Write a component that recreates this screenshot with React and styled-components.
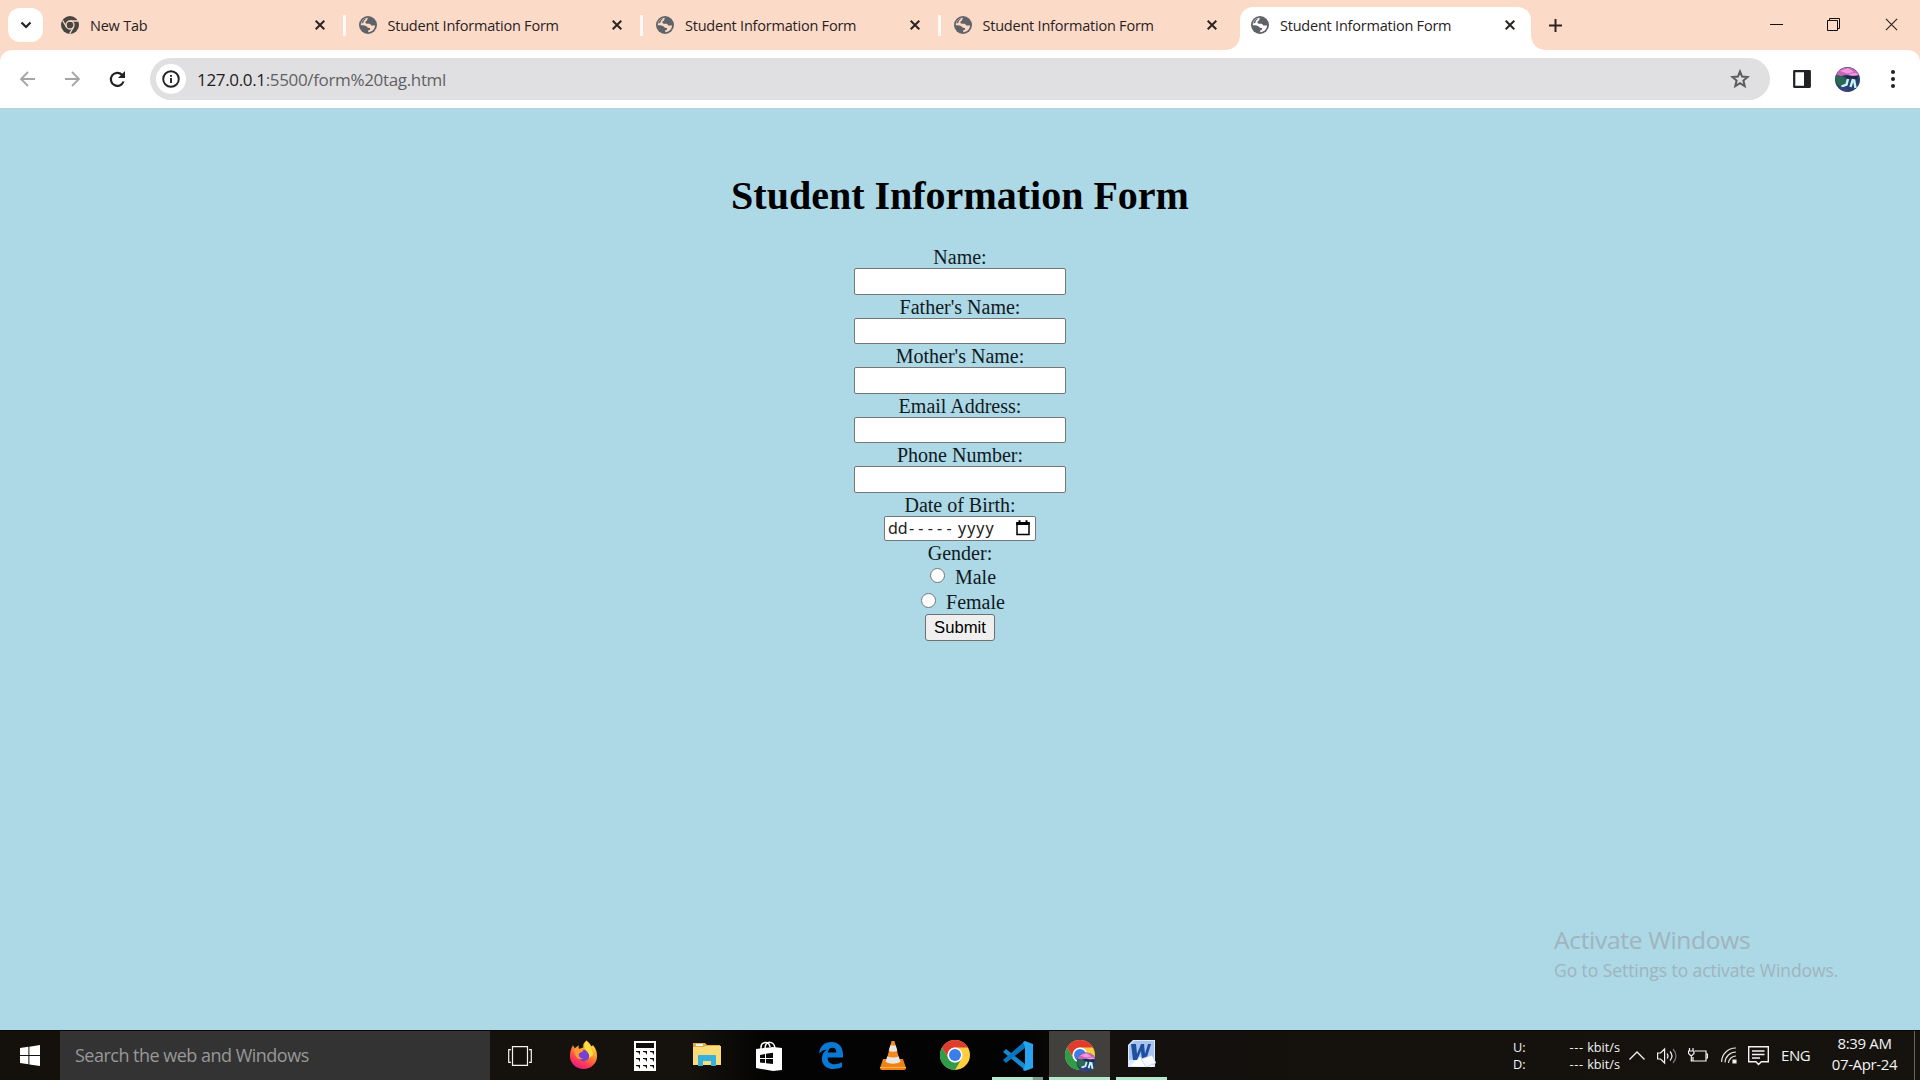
import React from "react";
import styled, { createGlobalStyle } from "styled-components";

const Global = createGlobalStyle`
  * { box-sizing: border-box; }
  body { margin: 0; overflow: hidden; font-family: "Open Sans", "Noto Sans", sans-serif; }
  svg { display: block; flex: none; }
`;
const ui = `"Open Sans", "Noto Sans", sans-serif`;

const Screen = styled.div`
  width: 1920px;
  height: 1080px;
  display: flex;
  flex-direction: column;
  overflow: hidden;
`;

/* ---------- tab strip ---------- */
const TabStrip = styled.div`
  height: 50px;
  flex: none;
  display: flex;
  background: #fcdac8;
`;
const TabSearch = styled.button`
  width: 35px;
  height: 34px;
  margin: 8px 5px 0 8px;
  padding: 0;
  border: 0;
  border-radius: 12px;
  background: #fff;
  display: flex;
  align-items: center;
  justify-content: center;
`;
const TabItem = styled.div`
  position: relative;
  width: ${(p) => (p.$active ? 291 : 297.5)}px;
  height: 43px;
  margin-top: 7px;
  margin-left: ${(p) => (p.$active ? 2 : 0)}px;
  padding: 0 ${(p) => (p.$active ? 16 : 21)}px 8px ${(p) => (p.$active ? 11 : 13)}px;
  display: flex;
  align-items: center;
  background: ${(p) => (p.$active ? "#fff" : "transparent")};
  border-radius: 13px 13px 0 0;
  ${(p) =>
    p.$divider &&
    `&::after { content: ""; position: absolute; right: 0; top: 8px; width: 3px; height: 21px; border-radius: 1px; background: #fffaf7; }`}
  ${(p) =>
    p.$active &&
    `&::before, &::after { content: ""; position: absolute; bottom: 0; width: 14px; height: 14px; }
     &::before { left: -14px; background: radial-gradient(circle at 0 0, transparent 13.5px, #fff 14px); }
     &::after { right: -14px; background: radial-gradient(circle at 100% 0, transparent 13.5px, #fff 14px); }`}
`;
const TabTitle = styled.span`
  flex: 1;
  margin-left: 11px;
  padding-top: 2px;
  font: 400 14.5px/20px ${ui};
  letter-spacing: -0.22px;
  color: #28221f;
  white-space: nowrap;
`;
const WindowButtons = styled.div`
  margin-left: auto;
  display: flex;
  gap: 44px;
  padding: 18px 22px 0 0;
`;
const NewTab = styled.div`
  padding: 19px 0 0 18px;
`;

/* ---------- toolbar ---------- */
const ToolbarBack = styled.div`
  height: 58px;
  flex: none;
  background: #fcdac8;
`;
const Toolbar = styled.div`
  height: 58px;
  display: flex;
  align-items: center;
  background: #fff;
  border-radius: 12px 12px 0 0;
  padding: 0 20px 0 19px;
`;
const NavIcons = styled.div`
  display: flex;
  gap: 27px;
  width: 131px;
`;
const Omnibox = styled.div`
  width: 1620px;
  height: 42px;
  border-radius: 21px;
  background: #e0e0e2;
  display: flex;
  align-items: center;
  padding: 0 20px 0 6px;
`;
const SiteInfo = styled.div`
  width: 30px;
  height: 30px;
  border-radius: 15px;
  background: #fff;
  display: flex;
  align-items: center;
  justify-content: center;
`;
const Url = styled.div`
  flex: 1;
  margin-left: 11px;
  padding-top: 2px;
  font: 400 17px/24px ${ui};
  letter-spacing: -0.34px;
  color: #606164;
`;
const Host = styled.span`
  color: #1f2023;
`;
const ToolbarEnd = styled.div`
  display: flex;
  align-items: center;
  margin-left: 23px;
`;
const Spaced = styled.div`
  margin-left: ${(p) => p.$gap}px;
`;

/* ---------- page ---------- */
const Page = styled.main`
  position: relative;
  height: 922px;
  flex: none;
  background: #add8e6;
  border-top: 1px solid #b9d0d8;
  font: 400 20px/23px "Liberation Serif", serif;
  color: #101a1e;
  padding-top: 64px;
`;
const Heading = styled.h1`
  margin: 0 0 26px;
  font: 700 40px/46px "Liberation Serif", serif;
  text-align: center;
  color: #000;
`;
const Form = styled.form`
  display: flex;
  flex-direction: column;
  align-items: center;
`;
const Label = styled.label`
  height: 23px;
  line-height: 24px;
`;
const Field = styled.input`
  width: 212px;
  height: 26.6px;
  border: 1px solid #767676;
  border-radius: 2px;
  background: #fff;
  padding: 0;
`;
const DateField = styled.div`
  width: 152px;
  height: 25px;
  border: 1px solid #767676;
  border-radius: 2px;
  background: #fff;
  display: flex;
  align-items: center;
  padding: 0 5px 0 3px;
`;
const DateText = styled.span`
  flex: 1;
  display: flex;
  font: 400 16px/22px "Noto Sans", ${ui};
  color: #222;
`;
const DatePart = styled.span`
  width: ${(p) => p.$w}px;
  letter-spacing: ${(p) => p.$ls || 0}px;
`;
const RadioRow = styled.label`
  height: 25px;
  display: flex;
  align-items: flex-start;
  line-height: 27px;
  padding-left: 2px;
`;
const Radio = styled.input.attrs({ type: "radio" })`
  appearance: none;
  width: 15px;
  height: 15px;
  margin: 4px 10px 0 4px;
  border: 1px solid #767676;
  border-radius: 50%;
  background: #fff;
`;
const Submit = styled.button`
  width: 70px;
  height: 27px;
  padding: 1px 0 0;
  border: 1px solid #6f6f6f;
  border-radius: 3px;
  background: #efefef;
  color: #000;
  font: 400 16.67px/24px "Liberation Sans", sans-serif;
`;
const Watermark = styled.div`
  position: absolute;
  left: 1554px;
  top: 815px;
  font-family: ${ui};
  color: #9fb4bd;
  white-space: nowrap;
`;
const WatermarkTitle = styled.div`
  font-size: 24.5px;
  line-height: 32px;
  letter-spacing: -0.3px;
`;
const WatermarkText = styled.div`
  font-size: 17.5px;
  line-height: 28px;
  letter-spacing: -0.07px;
`;

/* ---------- taskbar ---------- */
const Taskbar = styled.footer`
  height: 50px;
  flex: none;
  display: flex;
  background: linear-gradient(90deg, #14110c 0, #15120d 36%, #030303 40%, #030303 53%, #14100d 58%, #16130f 100%);
  border-top: 1px solid #050505;
`;
const Start = styled.div`
  width: 60px;
  padding: 14px 0 0 20px;
`;
const SearchBox = styled.div`
  width: 430px;
  height: 49px;
  background: #333;
  color: #989898;
  font: 400 18px/49px ${ui};
  letter-spacing: -0.51px;
  padding-left: 15px;
  white-space: nowrap;
`;
const AppSlot = styled.div`
  width: ${(p) => p.$w || 62}px;
  height: 49px;
  display: flex;
  align-items: center;
  justify-content: center;
  background: ${(p) => (p.$active ? "#42403d" : "transparent")};
  border-bottom: 3px solid transparent;
  padding-top: ${(p) => p.$drop ?? 3}px;
  ${(p) => p.$running && `border-image: linear-gradient(90deg, ${p.$running}) 1; border-width: 0 0 3px; border-style: solid;`}
  margin-left: ${(p) => p.$gap || 0}px;
`;
const Tray = styled.div`
  margin-left: auto;
  display: flex;
  align-items: center;
  color: #f3f3f3;
  font-family: ${ui};
  padding-right: 4px;
  border-right: 1px solid #67645f;
  margin-right: 5px;
`;
const Meter = styled.div`
  width: 107px;
  font-size: 12.7px;
  line-height: 17px;
  padding-top: 1px;
`;
const MeterRow = styled.div`
  display: flex;
  justify-content: space-between;
  white-space: nowrap;
`;
const Dashes = styled.span`
  letter-spacing: 0.7px;
`;
const Lang = styled.span`
  font-size: 15px;
  width: 29px;
  margin-left: 12px;
  margin-bottom: 1px;
  letter-spacing: -0.4px;
`;
const Clock = styled.div`
  width: 71px;
  margin: 0 10px 3px 19px;
  text-align: center;
  font-size: 15px;
  line-height: 21px;
  white-space: nowrap;
  letter-spacing: -0.35px;
`;

/* ---------- icons ---------- */
const Close = ({ s = 10, w = 2, c = "#2b2421" }) => (
  <svg width={s} height={s} viewBox="0 0 10 10"><path d="M.7.7l8.6 8.6M9.3.7L.7 9.3" stroke={c} strokeWidth={w} /></svg>
);
const Globe = ({ land = "#fcdac8" }) => (
  <svg width="18" height="18" viewBox="0 0 18 18">
    <circle cx="9" cy="9" r="9" fill="#5f6368" />
    <path d="M9.500 1.700C7.500 2.800 9 4 7.500 4.700 5.800 5.500 6 7.600 7.800 7.700h2.700c1.200 0 1 1.700 2.300 1.900h3.300C15.700 13.500 13 16 9.300 16.300L9 14.600c1.900-.2 2.200-1.300 2.100-2.500-1.300 0-2.300.1-3.100-1.300C7 9.200 4.200 9.400 1.800 9.200 1.700 5 5 1.500 9.500 1.700z" fill={land} />
    <path d="M2.300 7.500C3 4.500 5 2.500 7.300 2.200 6.600 3.600 4.700 4 4.600 6c0 1-1 1.300-2.300 1.500z" fill="#5f6368" />
  </svg>
);
const ChromeMono = () => (
  <svg width="18" height="18" viewBox="0 0 18 18">
    <circle cx="9" cy="9" r="9" fill="#494541" />
    <circle cx="9" cy="9" r="4" fill="none" stroke="#fcdac8" strokeWidth="1.300" />
    <path d="M9 5h8M5.500 11L1.600 4.500M12.500 11L8.700 17.600" stroke="#fcdac8" strokeWidth="1.300" />
  </svg>
);
const Scenery = () => (
  <g>
    <circle cx="12.500" cy="12.500" r="12.500" fill="#27436b" />
    <path d="M1 8a12.500 12.500 0 0 1 23 0l-6 1.500-6-1.500-6 1z" fill="#c765b8" />
    <path d="M5 4l8-3 6 4-7 1.500zM13 7l8-1 2 2-6 1z" fill="#f29ae0" />
    <path d="M1 8l8 2 4 5-6 6A12.500 12.500 0 0 1 1 8z" fill="#2b6952" />
    <path d="M8 8.500l15 .5-1 3.500-9-1z" fill="#1d2c47" />
    <path d="M13 12l-1.500 5.500-5 2M18 12l-2.500 8M19 12.500l1.500 8.500" stroke="#c8f3ff" strokeWidth="2.400" fill="none" />
    <path d="M4 21c4-2 8-1 10 3.500-4 .3-7.500-.5-10-3.500z" fill="#3d3f86" />
  </g>
);
const Chrome = ({ badge }) => (
  <svg width="32" height="32" viewBox="0 0 32 32">
    <circle cx="16" cy="15" r="15" fill="#ffcd40" />
    <path d="M16 0A15 15 0 0 1 29 7.500H16A7.500 7.500 0 0 0 9.500 18.700L3 7.500A15 15 0 0 1 16 0z" fill="#df3b2f" />
    <path d="M3 7.500l6.500 11.300A7.500 7.500 0 0 0 22.500 18.700L16 30A15 15 0 0 1 3 7.500z" fill="#2f9c4c" />
    <circle cx="16" cy="15" r="7.500" fill="#fff" />
    <circle cx="16" cy="15" r="6" fill="#3b7ded" />
    {badge && <g transform="translate(12.500 12.500) scale(.78)"><Scenery /></g>}
  </svg>
);
const Windows = () => (
  <svg width="20" height="21" viewBox="0 0 20 21" fill="#fff"><path d="M0 3l8.400-1.200V10H0zM9.400 1.700L20 0v10H9.400zM0 11h8.400v8.300L0 18zM9.400 11H20v10L9.400 19.400z" /></svg>
);
const TaskView = () => (
  <svg width="24" height="20" viewBox="0 0 24 20" fill="none" stroke="#f4f4f4" strokeWidth="1.200"><path d="M4.500.7h15v18.600h-15zM3 3.700H.7v12.600H3M21 3.700h2.300v12.600H21" /></svg>
);
const Firefox = () => (
  <svg width="29" height="30" viewBox="0 0 30 30">
    <defs>
      <linearGradient id="ff" x1=".8" y1="0" x2=".3" y2="1"><stop offset="0" stopColor="#fff04d" /><stop offset=".4" stopColor="#ff9a26" /><stop offset=".75" stopColor="#ff3d55" /><stop offset="1" stopColor="#e31887" /></linearGradient>
    </defs>
    <path d="M18 0c2 2 4 3 5 6l2-1c3 4 4 7 4 11a14 13.500 0 0 1-28 0C1 12 2 9 4 5l2 3 4-3v4l5-2c-1-3 1-5 3-7z" fill="url(#ff)" />
    <circle cx="15" cy="15.500" r="6" fill="#7542d5" />
    <path d="M5 9c4-2 7 0 10 1-1 2-4 2-5 4 0 3 2 5 5 5-5 2-9-2-10-10z" fill="#ff9a31" />
    <path d="M18 1c1 4 7 7 7 14l-4 3c1-6-5-7-5-12z" fill="#ffdf3d" />
  </svg>
);
const Calculator = () => (
  <svg width="22" height="30" viewBox="0 0 22 30">
    <path d="M0 0h22v30H0z" fill="#fff" /><path d="M2 2h18v5H2z" fill="#100e0b" />
    {[10, 17, 24].map((y) => [2, 9, 16].map((x) => <path key={`${x}-${y}`} d={`M${x} ${y}h4v4l-1.500-2.500-2.500-.5z`} fill="#100e0b" />))}
  </svg>
);
const Folder = () => (
  <svg width="28" height="24" viewBox="0 0 28 24"><path d="M0 0h12l2 2h13v6H0z" fill="#e3ad38" /><path d="M3 1h7v2H3z" fill="#eef" /><path d="M0 4h10l3-1h15v19H0z" fill="#fbdc7b" /><path d="M5 23V13q0-1 1-1h16q1 0 1 1v10h-5v-5h-8v5z" fill="#35b1dc" /></svg>
);
const Store = () => (
  <svg width="28" height="30" viewBox="0 0 28 30"><path d="M6 9V6c0-5 8-7 9 0M10 7c1-8 9-7 10 0" fill="none" stroke="#fff" strokeWidth="1.500" /><path d="M1 8l17-2 9 1v22l-9 1L1 27z" fill="#fff" /><path d="M5 14l5-1v4H5zM11 12.800l7-1V17h-7zM5 18h5v4l-5-.5zM11 18h7v5l-7-.8z" fill="#090909" /></svg>
);
const Edge = () => (
  <svg width="25" height="27" viewBox="0 0 26 28"><path d="M0 12C1 4 6 0 13 0c8 0 12 6 12 13v3H9c0 5 3 7 7 7 3 0 5-.7 8-2v5c-3 1.600-6 2-9 2C8 28 3 24 3 17c0-4 2-7 5-9-4 0-6 2-8 4zM9 11h9c0-3-1-5-4-5-3 0-4 2-5 5z" fill="#0a78d5" fillRule="evenodd" /></svg>
);
const Cone = () => (
  <svg width="26" height="29" viewBox="0 0 26 29"><path d="M3 18h20l3 9q0 2-2 2H2q-2 0-2-2z" fill="#f08315" /><path d="M11.500 0h3L20 21q-7 3-14 0z" fill="#f38a1d" /><path d="M10.200 4.500h5.600l1.500 5.500q-4 1.500-8.600 0zM7.200 15.500q6 2 11.600 0L20.500 21q-7.500 3.500-15 0z" fill="#e9e7e3" /><path d="M0 26.500h26" stroke="#ffb243" /></svg>
);
const VsCode = () => (
  <svg width="30" height="30" viewBox="0 0 30 30"><path d="M0 11l3-3 19 15v6z" fill="#1688d0" /><path d="M0 19l3 3L22 7V0z" fill="#0874bd" /><path d="M22 0l8 3v24l-8 3-2-1 2-5V6l-2-5z" fill="#27a4ef" /></svg>
);
const Word = () => (
  <svg width="28" height="28" viewBox="0 0 28 28"><path d="M5 0h22v27H0V5z" fill="#dce8fb" /><path d="M6 1h20v17L1 20V6z" fill="#a8c3ed" /><path d="M2 26l10-9 13 4v6z" fill="#fff" /><path d="M3 4h5l1 10 4-10h3l1 10 3-10h3l-5 16h-4l-1-9-4 9H5z" fill="#1f4f9f" /><path d="M13 19l11-4 4 8-10 4z" fill="#f8fbff" stroke="#acbfe4" strokeWidth=".6" /></svg>
);

const running = "#b2e9cc, #b2e9cc";
const labels = ["Name:", "Father's Name:", "Mother's Name:", "Email Address:", "Phone Number:"];

export default function App() {
  return (
    <Screen>
      <Global />
      <TabStrip>
        <TabSearch aria-label="Search tabs">
          <svg width="12" height="8" viewBox="0 0 12 8"><path d="M1.500 1.500L6 6l4.500-4.500" fill="none" stroke="#222" strokeWidth="2.200" /></svg>
        </TabSearch>
        <TabItem $divider><ChromeMono /><TabTitle>New Tab</TabTitle><Close /></TabItem>
        {[1, 2, 3].map((n) => (
          <TabItem key={n} $divider={n < 3}><Globe /><TabTitle>Student Information Form</TabTitle><Close /></TabItem>
        ))}
        <TabItem $active><Globe land="#fff" /><TabTitle>Student Information Form</TabTitle><Close /></TabItem>
        <NewTab><svg width="13" height="13" viewBox="0 0 13 13"><path d="M6.500 0v13M0 6.500h13" stroke="#2b2421" strokeWidth="2" /></svg></NewTab>
        <WindowButtons>
          <svg width="13" height="13" viewBox="0 0 13 13"><path d="M0 6.500h13" stroke="#111" /></svg>
          <svg width="14" height="13" viewBox="0 0 14 13" fill="none" stroke="#111"><path d="M.5 2.500h10v10H.5zM2.500 2.500V.5h10v10h-2" /></svg>
          <Close s={13} w={0.9} />
        </WindowButtons>
      </TabStrip>
      <ToolbarBack>
        <Toolbar>
          <NavIcons>
            <svg width="18" height="16" viewBox="0 0 18 16" fill="none" stroke="#a5a5a7" strokeWidth="1.800"><path d="M16 8H2M9 1L2 8l7 7" /></svg>
            <svg width="18" height="16" viewBox="0 0 18 16" fill="none" stroke="#a5a5a7" strokeWidth="1.800"><path d="M1 8h14M8 1l7 7-7 7" /></svg>
            <svg width="17" height="17" viewBox="0 0 17 17"><path d="M14.500 10.500A6.500 6.500 0 1 1 13 3.800L15 6" fill="none" stroke="#222" strokeWidth="2.200" /><path d="M16 0v7H9z" fill="#222" /></svg>
          </NavIcons>
          <Omnibox>
            <SiteInfo><svg width="18" height="18" viewBox="0 0 18 18"><circle cx="9" cy="9" r="7.800" fill="none" stroke="#222" strokeWidth="1.900" /><path d="M9 8v5M9 5v1.800" stroke="#222" strokeWidth="1.900" /></svg></SiteInfo>
            <Url><Host>127.0.0.1</Host>:5500/form%20tag.html</Url>
            <svg width="20" height="20" viewBox="0 0 20 20"><path d="M10 2.500l2.100 5.100 5.500.4-4.200 3.600 1.300 5.400-4.700-2.900L5.300 17l1.300-5.400L2.400 8l5.500-.4z" fill="none" stroke="#5b5c5f" strokeWidth="2" /></svg>
          </Omnibox>
          <ToolbarEnd>
            <svg width="18" height="18" viewBox="0 0 18 18"><path d="M1.200 1.200h15.600v15.600H1.200z" fill="none" stroke="#202124" strokeWidth="2.200" strokeLinejoin="round" /><path d="M11 1h6v16h-6z" fill="#202124" /></svg>
            <Spaced $gap={24}><svg width="25" height="25" viewBox="0 0 25 25"><Scenery /></svg></Spaced>
            <Spaced $gap={31}><svg width="4" height="18" viewBox="0 0 4 18" fill="#202124"><circle cx="2" cy="2" r="2" /><circle cx="2" cy="9" r="2" /><circle cx="2" cy="16" r="2" /></svg></Spaced>
          </ToolbarEnd>
        </Toolbar>
      </ToolbarBack>
      <Page>
        <Heading>Student Information Form</Heading>
        <Form onSubmit={(e) => e.preventDefault()}>
          {labels.map((t) => <React.Fragment key={t}><Label>{t}</Label><Field aria-label={t} /></React.Fragment>)}
          <Label>Date of Birth:</Label>
          <DateField>
            <DateText><DatePart $w={21}>dd</DatePart><DatePart $w={49} $ls={4.2}>-----</DatePart><DatePart $w={40} $ls={1}>yyyy</DatePart></DateText>
            <svg width="14" height="16" viewBox="0 0 14 16"><path d="M1 3h12v11.500H1z" fill="none" stroke="#000" strokeWidth="1.500" /><path d="M.3 2h13.400v3H.3zM2.500.3h2V3h-2zM9.500.3h2V3h-2z" /></svg>
          </DateField>
          <Label>Gender:</Label>
          <RadioRow><Radio name="gender" />Male</RadioRow>
          <RadioRow><Radio name="gender" />Female</RadioRow>
          <Submit>Submit</Submit>
        </Form>
        <Watermark>
          <WatermarkTitle>Activate Windows</WatermarkTitle>
          <WatermarkText>Go to Settings to activate Windows.</WatermarkText>
        </Watermark>
      </Page>
      <Taskbar>
        <Start><Windows /></Start>
        <SearchBox>Search the web and Windows</SearchBox>
        <AppSlot $w={60}><TaskView /></AppSlot>
        <AppSlot $gap={2} $drop={2}><Firefox /></AppSlot>
        <AppSlot><Calculator /></AppSlot>
        <AppSlot $drop={2}><Folder /></AppSlot>
        <AppSlot><Store /></AppSlot>
        <AppSlot><Edge /></AppSlot>
        <AppSlot $drop={2}><Cone /></AppSlot>
        <AppSlot $drop={4}><Chrome /></AppSlot>
        <AppSlot $w={51} $gap={6} $running="#b2e9cc 78%, #7da08e 79%"><VsCode /></AppSlot>
        <AppSlot $w={61} $gap={6} $active $running={running} $drop={4}><Chrome badge /></AppSlot>
        <AppSlot $w={51} $gap={6} $running={running} $drop={0}><Word /></AppSlot>
        <Tray>
          <Meter>
            <MeterRow><span>U:</span><span><Dashes>---</Dashes> kbit/s</span></MeterRow>
            <MeterRow><span>D:</span><span><Dashes>---</Dashes> kbit/s</span></MeterRow>
          </Meter>
          <Spaced $gap={9}><svg width="16" height="9" viewBox="0 0 16 9"><path d="M.5 8.500L8 1l7.500 7.500" fill="none" stroke="#f3f3f3" strokeWidth="1.300" /></svg></Spaced>
          <Spaced $gap={12}><svg width="20" height="18" viewBox="0 0 20 18" fill="none" stroke="#f3f3f3" strokeWidth="1.200"><path d="M.6 6h3l4-4v14l-4-4h-3zM10 6.500q2 2.500 0 5M13 4.500q4 4.500 0 9" /><path d="M16 2q6 7 0 14" stroke="#777" /></svg></Spaced>
          <Spaced $gap={11}><svg width="20" height="15" viewBox="0 0 20 15" fill="none" stroke="#f3f3f3" strokeWidth="1.200"><path d="M7 3h11v10H5V9M18 6h1.500v4H18M1.500 0v3M5 0v3M.5 3h5.500v2.500L4 7.500H2.500L.5 5.500zM3.300 8v5H5" /></svg></Spaced>
          <Spaced $gap={13}><svg width="16" height="17" viewBox="0 0 16 17" fill="none" stroke="#e3e3e3" strokeWidth="1.200"><path d="M.6 15A14 14 0 0 1 15 1M4 15.500A11 11 0 0 1 15 5M7.500 16A7.500 7.500 0 0 1 15 9" /><path d="M12 13h3v3h-3z" fill="#fff" /></svg></Spaced>
          <Spaced $gap={11}><svg width="21" height="20" viewBox="0 0 21 20" fill="none" stroke="#f3f3f3" strokeWidth="1.400"><path d="M.7.7h19.600v15h-7L10.500 18.500 8 15.700H.7zM4 5h12.500M4 8.500h12.500M4 12h8" /></svg></Spaced>
          <Lang>ENG</Lang>
          <Clock>8:39 AM<br />07-Apr-24</Clock>
        </Tray>
      </Taskbar>
    </Screen>
  );
}
